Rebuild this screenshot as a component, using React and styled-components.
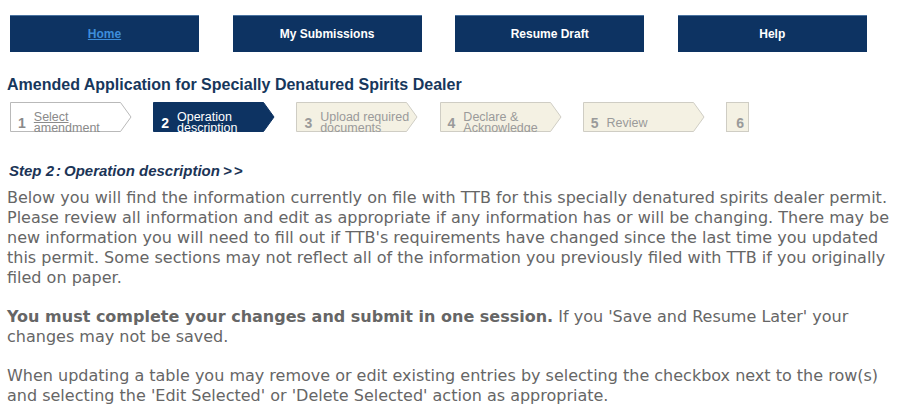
import React from "react"
import styled, { createGlobalStyle } from "styled-components"

const GlobalStyle = createGlobalStyle`
  body {
    margin: 0;
    background: #ffffff;
    font-family: "Liberation Sans", Arial, sans-serif;
  }
`

const navItems = [
  { label: "Home", link: true },
  { label: "My Submissions" },
  { label: "Resume Draft" },
  { label: "Help" },
]

const steps = [
  { num: 1, label: "Select amendment", state: "done" },
  { num: 2, label: "Operation description", state: "active" },
  { num: 3, label: "Upload required documents", state: "todo" },
  { num: 4, label: "Declare & Acknowledge", state: "todo" },
  { num: 5, label: "Review", state: "todo" },
]

const stepColors = {
  done: { fill: "#ffffff", stroke: "#b9b9b9", text: "#8a8a8a" },
  active: { fill: "#0d3362", stroke: "#0d3362", text: "#ffffff" },
  todo: { fill: "#f4f1e3", stroke: "#cfcdc4", text: "#9a9a9a" },
}

function StepShape({ state }) {
  const c = stepColors[state]
  return (
    <Shape viewBox="0 0 122 30" preserveAspectRatio="none">
      <path
        d="M0.5 0.5 H110.5 L121 15 L110.5 29.5 H0.5 Z"
        fill={c.fill}
        stroke={c.stroke}
        strokeWidth="1"
      />
    </Shape>
  )
}

export default function App() {
  return (
    <Page>
      <GlobalStyle />
      <Nav>
        {navItems.map(item => (
          <NavButton key={item.label}>
            {item.link ? <NavLink href="#">{item.label}</NavLink> : item.label}
          </NavButton>
        ))}
      </Nav>

      <Title>Amended Application for Specially Denatured Spirits Dealer</Title>

      <Steps>
        {steps.map(s => (
          <Step key={s.num} $state={s.state}>
            <StepShape state={s.state} />
            <StepInner>
              <StepNum>{s.num}</StepNum>
              <StepLabel $link={s.state === "done"}>{s.label}</StepLabel>
            </StepInner>
          </Step>
        ))}
        <LastStep>6</LastStep>
      </Steps>

      <StepHeading>
        Step 2<Colon>:</Colon>Operation description<Arrows>&gt;&gt;</Arrows>
      </StepHeading>

      <Body>
        <p>
          Below you will find the information currently on file with TTB for this
          specially denatured spirits dealer permit. Please review all information
          and edit as appropriate if any information has or will be changing. There
          may be new information you will need to fill out if TTB's requirements
          have changed since the last time you updated this permit. Some sections
          may not reflect all of the information you previously filed with TTB if
          you originally filed on paper.
        </p>
        <p>
          <strong>You must complete your changes and submit in one session.</strong>{" "}
          If you 'Save and Resume Later' your changes may not be saved.
        </p>
        <p>
          When updating a table you may remove or edit existing entries by selecting
          the checkbox next to the row(s) and selecting the 'Edit Selected' or
          'Delete Selected' action as appropriate.
        </p>
      </Body>
    </Page>
  )
}

const Page = styled.div`
  padding: 15px 0 0 7px;
  width: 896px;
`

const Nav = styled.nav`
  display: flex;
  gap: 33.6px;
  padding-left: 3px;
`

const NavButton = styled.div`
  width: 189px;
  height: 37px;
  box-sizing: border-box;
  background: #0d3362;
  border-top: 1px solid #4a73a0;
  color: #ffffff;
  font-weight: bold;
  font-size: 12px;
  display: flex;
  align-items: center;
  justify-content: center;
`

const NavLink = styled.a`
  color: #3d8ddb;
  text-decoration: underline;
`

const Title = styled.h1`
  margin: 23px 0 0;
  font-size: 16px;
  line-height: 20px;
  font-weight: bold;
  color: #17375c;
`

const Steps = styled.div`
  display: flex;
  gap: 21.2px;
  margin: 7px 0 0 3px;
`

const Step = styled.div`
  position: relative;
  width: 122px;
  height: 30px;
  overflow: hidden;
  color: ${p => stepColors[p.$state].text};
`

const Shape = styled.svg`
  position: absolute;
  inset: 0;
  width: 100%;
  height: 100%;
`

const StepInner = styled.div`
  position: relative;
  display: flex;
  align-items: center;
  box-sizing: border-box;
  height: 30px;
  padding: 12px 4px 0 8px;
`

const StepNum = styled.span`
  font-size: 14px;
  font-weight: bold;
  margin-right: 8px;
`

const StepLabel = styled.span`
  font-size: 12.5px;
  line-height: 11px;
  text-decoration: ${p => (p.$link ? "underline" : "none")};
`

const LastStep = styled.div`
  width: 23px;
  height: 30px;
  box-sizing: border-box;
  background: #f4f1e3;
  border: 1px solid #cfcdc4;
  color: #9a9a9a;
  font-size: 14px;
  font-weight: bold;
  display: flex;
  align-items: center;
  justify-content: flex-end;
  padding: 11px 4px 0 0;
`

const StepHeading = styled.h2`
  margin: 30px 0 0 2px;
  font-size: 15px;
  line-height: 18px;
  font-style: italic;
  font-weight: bold;
  color: #1b3456;
`

const Colon = styled.span`
  margin: 0 3px 0 2px;
`

const Arrows = styled.span`
  margin-left: 3px;
  letter-spacing: 2px;
`

const Body = styled.div`
  margin-top: 8px;
  font-family: "DejaVu Sans", Verdana, sans-serif;
  font-size: 16px;
  line-height: 20px;
  color: #666666;
  p {
    margin: 0 0 19px;
  }
  strong {
    font-weight: bold;
  }
`
